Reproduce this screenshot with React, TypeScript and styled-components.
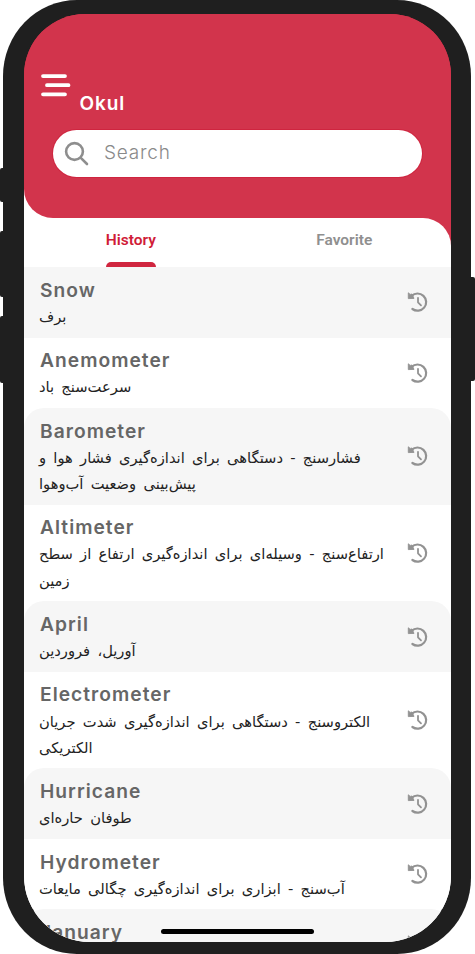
import React from "react";
import styled, { createGlobalStyle } from "styled-components";

const crimson = "#d2344c";
const shell = "#1f1f1f";

const GlobalStyle = createGlobalStyle`
  * { box-sizing: border-box; }
  html, body { margin: 0; padding: 0; background: #fff; }
  body { width: 475px; height: 954px; overflow: hidden; }
`;

const Stage = styled.div`
  position: relative;
  width: 475px;
  height: 954px;
  padding-left: 3px;
  overflow: hidden;
  background: #fff;
  font-family: Inter, "Liberation Sans", sans-serif;
`;

const SideKey = styled.i<{ $side: "left" | "right"; $top: number; $height: number }>`
  position: absolute;
  ${(p) => p.$side}: 0;
  top: ${(p) => p.$top}px;
  width: 8px;
  height: ${(p) => p.$height}px;
  border-radius: 2px;
  background: ${shell};
`;

const Phone = styled.div`
  position: relative;
  width: 468px;
  height: 954px;
  padding: 14px 20px 12px 21px;
  border-radius: 74px / 76px;
  background: ${shell};
`;

const Screen = styled.main`
  position: relative;
  display: flex;
  flex-direction: column;
  width: 427px;
  height: 928px;
  overflow: hidden;
  border-radius: 61px 61px 66px 66px;
  background: linear-gradient(${crimson} 120px, #fff 120px);
`;

const Header = styled.header`
  flex: none;
  height: 204px;
  padding: 60px 29px 0 17px;
  border-bottom-left-radius: 29px;
  background: ${crimson};
`;

const TitleBar = styled.div`
  display: flex;
  align-items: flex-start;
  height: 56px;
`;

const MenuIcon = styled.svg`
  flex: none;
  width: 30px;
  height: 24px;
`;

const AppName = styled.h1`
  margin: 17px 0 0 8.5px;
  color: #fff;
  font-size: 19px;
  line-height: 25px;
  font-weight: 600;
  letter-spacing: 0.9px;
`;

const SearchBar = styled.label`
  display: flex;
  align-items: center;
  height: 47px;
  margin-left: 12px;
  padding: 0 0 2px 11px;
  border-radius: 24px;
  background: #fff;
  box-shadow: 0 0 0 1px rgba(203, 20, 48, 0.45);
  color: #8a8a8a;
  font-size: 19px;
  font-weight: 300;
  letter-spacing: 0.8px;
`;

const SearchIcon = styled.svg`
  width: 26px;
  height: 26px;
  margin: 2px 14px 0 0;
`;

const TabsBackdrop = styled.div`
  flex: none;
  background: ${crimson};
`;

const Tabs = styled.nav`
  display: grid;
  grid-template-columns: 1fr 1fr;
  height: 49px;
  border-top-right-radius: 28px;
  background: #fff;
`;

const Tab = styled.div<{ $active?: boolean }>`
  display: flex;
  flex-direction: column;
  align-items: center;
  justify-content: space-between;
  width: fit-content;
  margin: 0 auto;
  padding-top: 12.4px;
  color: ${(p) => (p.$active ? "#d01c38" : "#8f8f8f")};
  font-family: Roboto, sans-serif;
  font-size: 15.5px;
  line-height: 20px;
  font-weight: 600;

  &::after {
    content: "";
    width: 100%;
    height: 5px;
    border-radius: 5px 5px 0 0;
    background: ${(p) => (p.$active ? "#d0263f" : "transparent")};
  }
`;

const List = styled.section`
  flex: 1;
  min-height: 0;
  overflow: hidden;
`;

const Row = styled.article<{ $shaded: boolean; $rounded: boolean }>`
  display: flex;
  align-items: center;
  justify-content: space-between;
  min-height: 70.5px;
  padding: 9.6px 22px 7.6px 15px;
  border-radius: ${(p) => (p.$rounded ? "20px 20px 0 0" : "0")};
  background: ${(p) => (p.$shaded ? "#f6f6f6" : "#fff")};
`;

const Entry = styled.div`
  align-self: flex-start;
`;

const Word = styled.h2`
  margin: 0 0 0 1px;
  color: #666;
  font-size: 19.2px;
  line-height: 26.2px;
  font-weight: 600;
  letter-spacing: 1.03px;
`;

const Meaning = styled.p`
  margin: 0;
  padding-top: 0.9px;
  direction: rtl;
  text-align: left;
  color: #222;
  font-family: "DejaVu Sans", sans-serif;
  font-size: 14.7px;
  word-spacing: 2.6px;
`;

const Line = styled.span`
  display: block;
  height: 26.2px;
  line-height: 26.2px;
  white-space: nowrap;
`;

const RecentSvg = styled.svg`
  flex: none;
  width: 22px;
  height: 22px;
  margin-bottom: 2px;
`;

const HomeBar = styled.div`
  position: absolute;
  left: 137px;
  bottom: 8px;
  width: 153px;
  height: 5px;
  border-radius: 3px;
  background: #000;
`;

const RecentIcon = () => (
  <RecentSvg viewBox="0 0 22 22" fill="none" stroke="#929292">
    <path d="M4.6 4.9A8.6 8.6 0 1 1 5.4 18" strokeWidth="2.2" strokeLinecap="round" />
    <path d="M1.3 1.8 3.2 3.4 5 3 7 7.4 1.3 7.6Z" fill="#929292" strokeWidth="0.9" strokeLinejoin="round" />
    <path d="M11 6.8V11.3L14 14.4" strokeWidth="1.8" strokeLinecap="round" strokeLinejoin="round" />
  </RecentSvg>
);

const entries = [
  { word: "Snow", lines: ["برف"] },
  { word: "Anemometer", lines: ["سرعت‌سنج باد"] },
  { word: "Barometer", lines: ["فشارسنج - دستگاهی برای اندازه‌گیری فشار هوا و", "پیش‌بینی وضعیت آب‌وهوا"] },
  { word: "Altimeter", lines: ["ارتفاع‌سنج - وسیله‌ای برای اندازه‌گیری ارتفاع از سطح", "زمین"] },
  { word: "April", lines: ["آوریل، فروردین"] },
  { word: "Electrometer", lines: ["الکتروسنج - دستگاهی برای اندازه‌گیری شدت جریان", "الکتریکی"] },
  { word: "Hurricane", lines: ["طوفان حاره‌ای"] },
  { word: "Hydrometer", lines: ["آب‌سنج - ابزاری برای اندازه‌گیری چگالی مایعات"] },
  { word: "January", lines: [] },
];

export default function App() {
  return (
    <Stage>
      <GlobalStyle />
      <SideKey $side="left" $top={168} $height={34} />
      <SideKey $side="left" $top={231} $height={66} />
      <SideKey $side="left" $top={316} $height={67} />
      <SideKey $side="right" $top={277} $height={104} />
      <Phone>
        <Screen>
          <Header>
            <TitleBar>
              <MenuIcon viewBox="0 0 30 24" stroke="#fff" strokeWidth="3.8" strokeLinecap="round">
                <path d="M2 2.1H24M6 11.2H27.5M2 20.3H24" />
              </MenuIcon>
              <AppName>Okul</AppName>
            </TitleBar>
            <SearchBar>
              <SearchIcon viewBox="0 0 26 26" fill="none" stroke="#8e8e8e" strokeWidth="2.6" strokeLinecap="round">
                <circle cx="10.5" cy="10.5" r="8.4" />
                <path d="M16.8 16.8 23 23" />
              </SearchIcon>
              Search
            </SearchBar>
          </Header>
          <TabsBackdrop>
            <Tabs>
              <Tab $active>History</Tab>
              <Tab>Favorite</Tab>
            </Tabs>
          </TabsBackdrop>
          <List>
            {entries.map((entry, i) => (
              <Row key={entry.word} $shaded={i % 2 === 0} $rounded={i > 0 && i % 2 === 0}>
                <Entry>
                  <Word>{entry.word}</Word>
                  <Meaning lang="fa">
                    {entry.lines.map((line) => (
                      <Line key={line}>{line}</Line>
                    ))}
                  </Meaning>
                </Entry>
                <RecentIcon />
              </Row>
            ))}
          </List>
          <HomeBar />
        </Screen>
      </Phone>
    </Stage>
  );
}
